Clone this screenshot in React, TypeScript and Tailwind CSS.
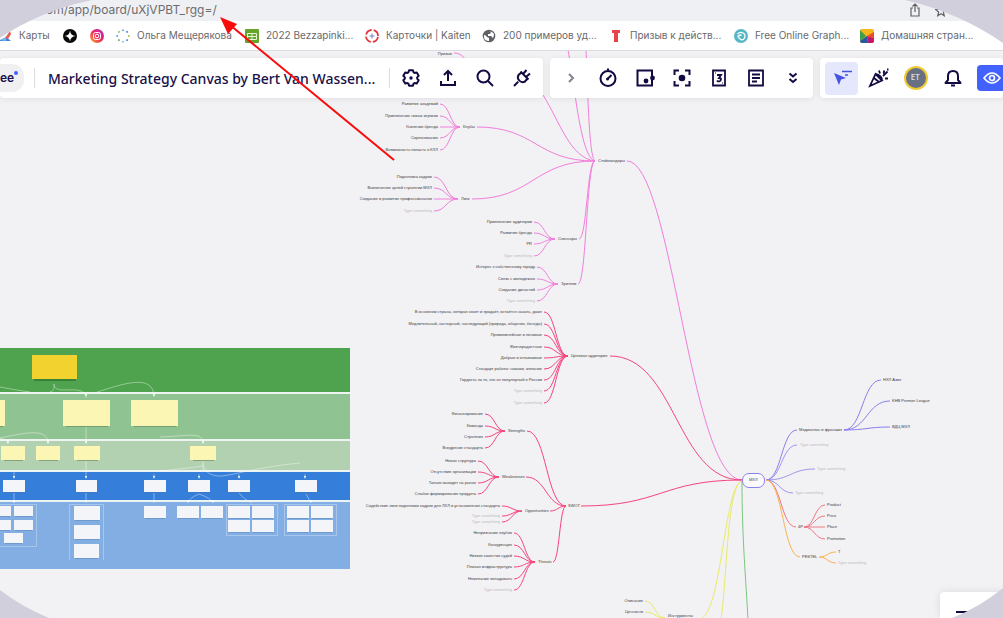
import React from "react";

type Leaf = [label: string, y: number, muted?: boolean];
type Group = { color: string; right: number; hub: [number, number]; label: string; exit: number; to: [number, number]; leaves: Leaf[] };

const GHOST = "Type something";

const groups: Group[] = [
  {
    color: "#f07fdc", right: 438, hub: [460, 127], label: "Клубы", exit: 477, to: [595, 161],
    leaves: [["Развитие академий", 104], ["Привлечение новых игроков", 116], ["Усиление бренда", 127], ["Соревнования", 138], ["Возможность попасть в КХЛ", 150]],
  },
  {
    color: "#f07fdc", right: 432, hub: [458, 199], label: "Лиги", exit: 472, to: [595, 161],
    leaves: [["Подготовка кадров", 177], ["Выполнение целей стратегии МХЛ", 188], ["Создание и развитие профессионалов", 199], [GHOST, 211, true]],
  },
  {
    color: "#f07fdc", right: 532, hub: [555, 239], label: "Спонсоры", exit: 579, to: [595, 161],
    leaves: [["Привлечение аудитории", 222], ["Развитие бренда", 233], ["PR", 244], [GHOST, 256, true]],
  },
  {
    color: "#f07fdc", right: 535, hub: [558, 284], label: "Зрители", exit: 578, to: [595, 161],
    leaves: [["Интерес к собственному городу", 267], ["Связь с молодежью", 279], ["Создание династий", 290], [GHOST, 301, true]],
  },
  {
    color: "#f5457f", right: 542, hub: [568, 356], label: "Целевая аудитория", exit: 610, to: [742, 480],
    leaves: [
      ["В основном страны, которая хочет и продаёт, остаётся начать, даже", 312],
      ["Медлительный, настырный, наследующий (природа, общение, беседы)", 324],
      ["Прямолинейные и ленивые", 335], ["Жизнерадостные", 347], ["Добрые и отзывчивые", 358],
      ["Стандарт работы: навыки, желание", 369], ["Гордость за то, что он популярный в России", 380],
      [GHOST, 391, true], [GHOST, 403, true],
    ],
  },
  {
    color: "#f5457f", right: 483, hub: [505, 431], label: "Strengths", exit: 527, to: [566, 506],
    leaves: [["Финансирование", 414], ["Команда", 426], ["Стратегия", 437], ["Внедрение стандарта", 448]],
  },
  {
    color: "#f5457f", right: 476, hub: [499, 477], label: "Weaknesses", exit: 526, to: [566, 506],
    leaves: [["Новая структура", 461], ["Отсутствие организации", 472], ["Только выходят на рынок", 483], ["Слабое формирование продукта", 494]],
  },
  {
    color: "#f5457f", right: 500, hub: [522, 511], label: "Opportunities", exit: 550, to: [566, 506],
    leaves: [["Содействие лиги подготовки кадров для ЛХЛ и установления стандарта", 506], [GHOST, 516, true], [GHOST, 522, true]],
  },
  {
    color: "#f5457f", right: 512, hub: [535, 562], label: "Threats", exit: 553, to: [566, 506],
    leaves: [["Непризнание клубов", 533], ["Конкуренция", 545], ["Низкое качество судей", 556], ["Плохая инфраструктура", 567], ["Нежелание вкладывать", 579], [GHOST, 590, true]],
  },
];

const bend = (x1: number, y1: number, x2: number, y2: number) => {
  const m = (x1 + x2) / 2;
  return `M${x1} ${y1}C${m} ${y1} ${m} ${y2} ${x2} ${y2}`;
};

function Label({ x, y, children, end, muted }: { x: number; y: number; children: string; end?: boolean; muted?: boolean }) {
  return (
    <text x={x} y={y + 1} textAnchor={end ? "end" : "start"} className={muted ? "fill-[#bdbcc2]" : "fill-[#3c3b42]"}>
      {children}
    </text>
  );
}

function MindMap() {
  return (
    <g fill="none" strokeWidth="1" className="font-['Liberation_Sans',sans-serif] text-[4px]">
      <g stroke="#f07fdc">
        <path d="M454 53C459 53 462 55 466 60M543 95C560 122 570 158 595 161M568 50C576 95 581 157 595 161M586 50C588 95 589 157 595 161" />
        <path d="M627 161C672 161 690 480 742 480" />
      </g>
      <Label x={452} y={54} end>Призыв</Label>
      {groups.map((g) => (
        <g key={g.label} stroke={g.color}>
          {g.leaves.map(([, y], i) => <path key={i} d={bend(g.right + 2, y, g.hub[0], g.hub[1])} />)}
          <path d={bend(g.exit, g.hub[1], g.to[0], g.to[1])} />
        </g>
      ))}
      <path stroke="#f5457f" d={bend(581, 506, 742, 480)} />
      {groups.map((g) => (
        <g key={g.label}>
          {g.leaves.map(([t, y, muted], i) => <Label key={i} x={g.right} y={y} end muted={muted}>{t}</Label>)}
          <Label x={g.hub[0] + 3} y={g.hub[1]}>{g.label}</Label>
        </g>
      ))}
      <Label x={598} y={161}>Стейкхолдеры</Label>
      <Label x={568} y={506}>SWOT</Label>

      <g stroke="#8a80ee">
        <path d={bend(766, 480, 797, 430)} />
        <path d={bend(766, 480, 797, 445)} opacity="0.8" />
        <path d={bend(766, 480, 815, 469)} opacity="0.8" />
        <path d={bend(766, 480, 793, 493)} opacity="0.8" />
        <path d={bend(844, 430, 881, 380)} />
        <path d={bend(844, 430, 890, 401)} />
        <path d={bend(844, 430, 890, 427)} />
      </g>
      <g stroke="#f07682">
        <path d={bend(766, 480, 796, 527)} />
        <path d={bend(804, 527, 825, 505)} />
        <path d={bend(804, 527, 825, 516)} />
        <path d={bend(804, 527, 825, 527)} />
        <path d={bend(804, 527, 825, 539)} />
      </g>
      <g stroke="#f8b455">
        <path d={bend(766, 480, 800, 557)} />
        <path d={bend(819, 557, 836, 552)} />
        <path d={bend(819, 557, 836, 563)} />
      </g>
      <g stroke="#e9ea6a">
        <path d="M742 481C724 484 722 614 700 619" />
        <path d="M742 481C727 484 727 580 721 620" />
        <path d={bend(645, 601, 665, 618)} />
        <path d={bend(645, 612, 665, 618)} />
      </g>
      <path stroke="#7cc67e" d="M742 481C742 540 746 580 748 620" />
      <rect x="742.5" y="473.5" width="22" height="14" rx="6.5" fill="#fbfaff" stroke="#8a80ee" />
      <Label x={749} y={480}>МХЛ</Label>
      <Label x={799} y={430}>Медиаплан и франшиз</Label>
      <Label x={800} y={445} muted>{GHOST}</Label>
      <Label x={817} y={469} muted>{GHOST}</Label>
      <Label x={795} y={493} muted>{GHOST}</Label>
      <Label x={883} y={380}>НХЛ Азия</Label>
      <Label x={892} y={401}>KHB Premier League</Label>
      <Label x={892} y={427}>ВДЦ МХЛ</Label>
      <Label x={798} y={527}>4P</Label>
      <Label x={827} y={505}>Product</Label>
      <Label x={827} y={516}>Price</Label>
      <Label x={827} y={527}>Place</Label>
      <Label x={827} y={539}>Promotion</Label>
      <Label x={802} y={557}>PESTEL</Label>
      <Label x={838} y={552}>T</Label>
      <Label x={838} y={563} muted>{GHOST}</Label>
      <Label x={643} y={601} end>Описание</Label>
      <Label x={643} y={612} end>Ценности</Label>
      <Label x={668} y={616}>Инструменты</Label>
    </g>
  );
}

type Box = [number, number, number, number];
const blueCards: Box[] = [
  [3, 480, 22, 12], [76, 480, 21, 12], [144, 480, 22, 12], [188, 480, 22, 12], [228, 480, 22, 12], [295, 480, 22, 12],
  [-4, 506, 15, 10], [14, 506, 19, 10], [-4, 520, 15, 10], [14, 520, 19, 10], [4, 533, 19, 10],
  [74, 506, 26, 14], [74, 525, 26, 14], [74, 544, 25, 14],
  [144, 506, 22, 12], [177, 506, 22, 12], [201, 506, 22, 12],
  [228, 506, 22, 12], [252, 506, 22, 12], [228, 520, 22, 12], [252, 520, 22, 12],
  [287, 506, 22, 12], [311, 506, 22, 12], [287, 520, 22, 12], [311, 520, 22, 12],
];
const yellowCards: Box[] = [
  [-10, 400, 15, 26], [63, 400, 47, 26], [131, 400, 47, 26],
  [1, 446, 24, 14], [36, 446, 24, 14], [74, 446, 26, 14], [190, 446, 26, 14],
];

function StoryMap() {
  return (
    <g>
      <rect y="347" width="350" height="222" fill="#eef4f2" />
      <rect y="348" width="350" height="44" fill="#4fa34f" />
      <rect y="394" width="350" height="45" fill="#90c392" />
      <rect y="441" width="350" height="29" fill="#b2d1b1" />
      <rect y="472" width="350" height="28" fill="#357fda" />
      <rect y="502" width="350" height="67" fill="#82aee3" />
      <g fill="none" stroke="#fff" strokeWidth="0.8" opacity="0.5">
        <path d="M0 387Q15 390 30 392M54 384C54 389 58 390 65 390S86 388 86 398M54 384Q55 391 50 392M97 392C120 385 154 372 154 397M86 427V444M0 438C25 433 48 427 48 444M0 438Q8 440 8 444M160 437C190 436 203 431 203 444M203 461C203 470 208 475 218 476S250 468 300 463M86 461V478M14 472V478M154 474V478M199 474V478M239 474V478M305 474V478M14 493V503M86 493V503M154 493V503M199 494Q189 498 188 503M199 494Q211 498 213 503M239 493Q243 499 252 503M306 494L311 503M203 463V470M160 471Q190 468 203 466" />
        <path d="M0 504.500H36.500V546.500H0M69.500 560V504.500H103.500V560M226.500 504.500H277.500V535.500H226.500ZM284.500 504.500H336.500V535.500H284.500Z" opacity="0.75" />
      </g>
      <g fill="#fff">
        {[[86, 395], [154, 395], [8, 442], [48, 442], [86, 442], [203, 442], [14, 477], [86, 477], [154, 477], [199, 477], [239, 477], [305, 477], [14, 501], [188, 501], [213, 501], [311, 501]].map(([x, y]) => (
          <path key={`${x}-${y}`} d={`M${x - 1} ${y - 1}h2l-1 3z`} />
        ))}
      </g>
      <rect x="34" y="378" width="42" height="3" rx="1" fill="#2f7230" opacity="0.7" />
      <rect x="32" y="355" width="45" height="24" fill="#f2d22e" />
      {yellowCards.map(([x, y, w, h]) => (
        <g key={`${x}-${y}`}>
          <rect x={x + 3} y={y + h - 1} width={w - 5} height="2" fill="#54784e" opacity="0.5" />
          <rect x={x} y={y} width={w} height={h} fill="#fcf6b4" />
        </g>
      ))}
      {blueCards.map(([x, y, w, h]) => (
        <g key={`${x}-${y}`}>
          <rect x={x + 1} y={y + h - 1} width={w - 2} height="2" fill="#4d6f9e" opacity="0.35" />
          <rect x={x} y={y} width={w} height={h} fill="#f4f5f8" />
        </g>
      ))}
    </g>
  );
}

function Icon({ children, width = 2 }: { children: React.ReactNode; width?: number }) {
  return (
    <svg width="24" height="24" viewBox="0 0 24 24" fill="none" stroke="currentColor" strokeWidth={width} aria-hidden="true">
      {children}
    </svg>
  );
}

function Tool({ name, children, className = "text-[#120b42]" }: { name: string; children: React.ReactNode; className?: string }) {
  return (
    <button type="button" aria-label={name} className={`flex h-9 w-[37px] shrink-0 items-center justify-center ${className}`}>
      {children}
    </button>
  );
}

const gearOutline = [0, 60, 120, 180, 240, 300]
  .flatMap((a) => [[a - 14, 8], [a + 14, 8], [a + 24, 6.2], [a + 36, 6.2]])
  .map(([deg, r]) => {
    const t = ((deg - 90) * Math.PI) / 180;
    return `${(12 + r * Math.cos(t)).toFixed(2)},${(12 + r * Math.sin(t)).toFixed(2)}`;
  })
  .join(" ");

function Bookmark({ label, icon, className }: { label: string; icon: React.ReactNode; className: string }) {
  return (
    <a href="#" aria-label={label || "Закладка"} className={`flex shrink-0 items-center gap-[7px] ${className}`}>
      <svg width="14" height="14" viewBox="0 0 14 14" aria-hidden="true">{icon}</svg>
      {label && <span>{label}</span>}
    </a>
  );
}

const dots = [0, 45, 90, 135, 180, 225, 270, 315];
const dotColors = ["#64a9e8", "#4285d8", "#b8bd58", "#4d87d8", "#91bde9", "#6ba95c", "#5f9de3", "#aab757"];

function BookmarksBar() {
  return (
    <nav aria-label="Закладки" className="flex h-[30px] items-center overflow-hidden border-b border-[#dcdbdf] bg-white font-['Inter',sans-serif] text-[10px] whitespace-nowrap text-[#69696c]">
      <Bookmark className="-ml-[2px] w-[65px]" label="Карты" icon={<><path d="M0 12 8 8l5 4z" fill="#3f83dc" /><path d="M7 9 12 2l1 3-3 5z" fill="#e35d51" /><path d="M2 11l6-3v4z" fill="#77b7ea" /></>} />
      <Bookmark className="w-[27px]" label="" icon={<><circle cx="7" cy="7" r="7" fill="#080808" /><path d="M7 1.500Q7.500 6.500 12.500 7 7.500 7.500 7 12.500 6.500 7.500 1.500 7 6.500 6.500 7 1.500z" fill="#fff" /></>} />
      <Bookmark className="w-[26px]" label="" icon={<><defs><linearGradient id="insta" x1="0" y1="1" x2="1" y2="0"><stop stopColor="#ffb52e" /><stop offset=".5" stopColor="#ef2760" /><stop offset="1" stopColor="#b32bd3" /></linearGradient></defs><circle cx="7" cy="7" r="7" fill="url(#insta)" /><g fill="none" stroke="#fff"><rect x="3.500" y="3.500" width="7" height="7" rx="2" /><circle cx="7" cy="7" r="1.800" /></g></>} />
      <Bookmark className="w-[129px]" label="Ольга Мещерякова" icon={dots.map((a, i) => <circle key={a} cx="7" cy="1.200" r="1" fill={dotColors[i]} transform={`rotate(${a} 7 7)`} />)} />
      <Bookmark className="w-[120px]" label="2022 Bezzapinki..." icon={<><rect width="14" height="14" rx="1" fill="#64a52a" /><path d="M2.500 4.500h9v6h-9zM2.500 7.500h9M7 4.500v6" fill="none" stroke="#e6f5d8" /></>} />
      <Bookmark className="w-[117px]" label="Карточки | Kaiten" icon={<><circle cx="7" cy="7" r="6" fill="#fff" stroke="#e23b43" strokeWidth="1.800" strokeDasharray="7.400 2.020" strokeDashoffset="-1" /><path d="M7 4.500v5M4.500 7h5" stroke="#7b80cf" strokeWidth="1" /></>} />
      <Bookmark className="w-[127px]" label="200 примеров уд..." icon={<><circle cx="7" cy="7" r="6.300" fill="#5f6368" /><path d="M2 6q2 0 3 2l2 1v3q-4 0-5-3zM7 2l2 1-1 2H6v2h3l2 2q1-2 1-4l-2-2z" fill="#fff" /></>} />
      <Bookmark className="w-[125px]" label="Призыв к действ..." icon={<path d="M3 1h8v3H9v9H5V4H3z" fill="#e8434a" />} />
      <Bookmark className="w-[126px]" label="Free Online Graph..." icon={<><circle cx="7" cy="7" r="7" fill="#56b8c6" /><path d="M3.500 5Q6 2.500 9 4t1.500 5T5.500 9.500 7 6.500M3.500 7.500Q6 5 7.500 6.500" fill="none" stroke="#fff" strokeWidth="1.200" /></>} />
      <Bookmark className="w-[120px]" label="Домашняя стран..." icon={<><rect width="14" height="14" rx="2" fill="#f5b51b" /><path d="M0 1v11l6-5z" fill="#3f9e49" /><path d="M0 12q0 2 2 2h6L7 7z" fill="#2559a8" /><path d="M7 7 14 9v3q0 2-2 2H8z" fill="#c4176c" /><path d="M7 7 14 3v6z" fill="#e94b2b" /></>} />
    </nav>
  );
}

const panel = "flex h-10 items-center rounded bg-white shadow-[0_1px_6px_rgba(20,10,60,0.08)]";

function Toolbars() {
  return (
    <header className="relative flex gap-[7px] pt-[7px]">
      <div className={`${panel} w-[543px] shrink-0 pr-[3px]`}>
        <span className="relative flex h-7 w-6 items-center rounded-r-xl bg-[#f0f0f3] font-['Inter',sans-serif] text-[12px] font-semibold text-[#17104a]">
          <span className="-mt-px">ee</span>
          <span className="absolute top-[7px] right-[6px] h-1 w-1 rounded-full bg-[#4262ff]" />
        </span>
        <span className="ml-[10px] h-5 w-px bg-[#dddde3]" />
        <h1 className="ml-[13px] flex-1 font-['Noto_Sans',sans-serif] text-[14px] font-medium whitespace-nowrap text-[#17104a]">
          Marketing Strategy Canvas by Bert Van Wassen...
        </h1>
        <span className="mr-[2px] h-5 w-px bg-[#dddde3]" />
        <Tool name="Settings"><Icon><polygon points={gearOutline} strokeLinejoin="round" /><circle cx="12" cy="12" r="1.700" fill="currentColor" stroke="none" /></Icon></Tool>
        <Tool name="Export"><Icon><path d="M5 15v4h14v-4M12 15V5M8 9l4-4 4 4" /></Icon></Tool>
        <Tool name="Search"><Icon><circle cx="10.500" cy="10.500" r="6" /><path d="m15 15 5 5" /></Icon></Tool>
        <Tool name="Apps"><Icon><path d="m4 20 4.200-4.200M10.500 5.500l8 8M11.500 6.500 8.500 9a4.800 4.800 0 0 0 6.500 6.500l2.500-3M13 8l3.500-4M16 11l4-3.500" /></Icon></Tool>
      </div>
      <div className={`${panel} shrink-0 px-[2px]`}>
        <Tool name="Expand" className="text-[#85838f]"><Icon><path d="m10 8 4 4-4 4" /></Icon></Tool>
        <Tool name="Timer"><Icon><circle cx="12" cy="12.500" r="7.500" /><path d="m11.500 13 4-4M12 5V2.500" /><circle cx="11.500" cy="13" r="1.500" fill="currentColor" stroke="none" /></Icon></Tool>
        <Tool name="Frames"><Icon><path d="M19 9V4.500H4.500v15H19V15" /><circle cx="13" cy="15" r="2.400" fill="currentColor" stroke="none" /><path d="M19 9v6" /><circle cx="19.500" cy="12" r="2.400" fill="currentColor" stroke="none" /></Icon></Tool>
        <Tool name="Focus"><Icon><path d="M4.500 9V4.500H9M15 4.500h4.500V9M19.500 15v4.500H15M9 19.500H4.500V15" /><circle cx="12" cy="12" r="3.300" fill="currentColor" stroke="none" /></Icon></Tool>
        <Tool name="Estimation"><Icon><path d="M6 4.500h12v15H6zM10 9h4l-2 3q2 0 2 1.500T12 15.500q-1.500 0-2-1" strokeWidth="1.800" /><path d="M8 7h1M15 17h1" strokeWidth="1.200" /></Icon></Tool>
        <Tool name="Notes"><Icon><path d="M5 4.500h14v15H5zM8 8.500h8M8 12h8M8 15.500h5" strokeWidth="1.800" /></Icon></Tool>
        <Tool name="More"><Icon><path d="m8.500 7.500 3.500 3 3.500-3M8.500 13l3.500 3 3.500-3" /></Icon></Tool>
      </div>
      <div className={`${panel} min-w-[183px] flex-1 overflow-hidden pl-[5px]`}>
        <button type="button" aria-label="Cursors" className="mr-[2px] flex h-[33px] w-[33px] shrink-0 items-center justify-center rounded-sm bg-[#e5e7fd] text-[#4654e4]">
          <Icon><path d="m4 7 12 5-5 1.500L9 19z" fill="currentColor" stroke="none" /><path d="M12 5.500h10M15 9h3" strokeWidth="1.500" /></Icon>
        </button>
        <Tool name="Reactions"><Icon><path d="M8.500 8 3 20l12-5.500zM8.500 8q3 .5 5 2.500t1.500 4M7 12l5 4" strokeWidth="1.800" /><path d="M12 4.500l1 3M17.500 4.500q-1.500 2 0 3.500M16 10l4.500-4.500M18 12.500h3" strokeWidth="1.800" /><path d="M20 3.500h1.500" /></Icon></Tool>
        <Tool name="Profile"><span className="flex h-6 w-6 items-center justify-center rounded-full border-2 border-[#f0ca32] bg-[#687083] font-['Inter',sans-serif] text-[7px] font-semibold text-[#dfe1e8]">ET</span></Tool>
        <Tool name="Notifications"><Icon><path d="M4.500 17h15L17 14v-4c0-3-2-5-5-5s-5 2-5 5v4z" strokeLinejoin="round" /><path d="M10 19.500h4" /></Icon></Tool>
        <button type="button" aria-label="View" className="ml-[6px] flex h-[26px] w-12 shrink-0 items-center rounded-sm bg-[#4262ff] pl-[6px] text-white">
          <svg width="18" height="18" viewBox="0 0 18 18" fill="none" stroke="currentColor" strokeWidth="1.700" aria-hidden="true"><path d="M1 9q8-10 16 0-8 10-16 0z" /><circle cx="9" cy="9" r="2.500" /></svg>
        </button>
      </div>
    </header>
  );
}

export default function App() {
  return (
    <div className="relative flex min-h-screen w-full flex-col overflow-hidden bg-[#f2f1f3]">
      <div className="flex h-[21px] items-center justify-between bg-[#eff0f4] pr-[56px] pl-[46px] font-['Inter',sans-serif] text-[12px] text-[#6d6d71]">
        <span className="-mt-[2px]">om/app/board/uXjVPBT_rgg=/</span>
        <span className="flex gap-3">
          <button type="button" aria-label="Поделиться" className="-mt-px">
            <svg width="16" height="16" viewBox="0 0 16 16" fill="none" stroke="#606064" strokeWidth="1.200"><path d="M6 6H4v8h8V6h-2M8 10V2M5.500 4.500 8 2l2.500 2.500" /></svg>
          </button>
          <button type="button" aria-label="В избранное">
            <svg width="12" height="12" viewBox="0 0 14 14" fill="none" stroke="#606064" strokeWidth="1.400"><path d="m7 1 1.800 4 4.200.4-3.200 2.800 1 4.300L7 10.200 3.200 12.500l1-4.300L1 5.400 5.200 5z" /></svg>
          </button>
        </span>
      </div>
      <BookmarksBar />
      <main className="relative flex-1">
        <svg className="absolute top-0 left-0" width="1003" height="567" viewBox="0 51 1003 567" role="img" aria-label="Marketing strategy board">
          <StoryMap />
          <MindMap />
        </svg>
        <Toolbars />
        <button type="button" aria-label="Zoom controls" className="absolute right-0 bottom-0 h-[26px] w-[63px] rounded-tl bg-white shadow-[0_0_8px_rgba(20,10,60,0.1)]">
          <span className="absolute top-[19px] left-4 h-[2px] w-3 bg-[#120b42]" />
        </button>
      </main>

      <svg className="pointer-events-none absolute top-0 left-0" width="92" height="38" fill="#d0cfdb" aria-hidden="true"><path d="M0 0H92Q40 11 0 38z" /></svg>
      <svg className="pointer-events-none absolute top-0 right-0" width="98" height="43" fill="#d0cfdb" aria-hidden="true"><path d="M0 0H98V43Q55 13 0 0z" /></svg>
      <svg className="pointer-events-none absolute bottom-0 left-0" width="49" height="28" fill="#d0cfdb" aria-hidden="true"><path d="M0 0Q22 17 49 28H0z" /></svg>
      <svg className="pointer-events-none absolute right-0 bottom-0" width="51" height="30" fill="#d0cfdb" aria-hidden="true"><path d="M51 0V30H0Q28 19 51 0z" /></svg>
      <svg className="pointer-events-none absolute top-0 left-0" width="400" height="165" aria-hidden="true">
        <path d="M394 160 230 25" stroke="#fb0a0a" strokeWidth="2" />
        <path d="m220 17 17 7-9 10z" fill="#fb0a0a" />
      </svg>
    </div>
  );
}
